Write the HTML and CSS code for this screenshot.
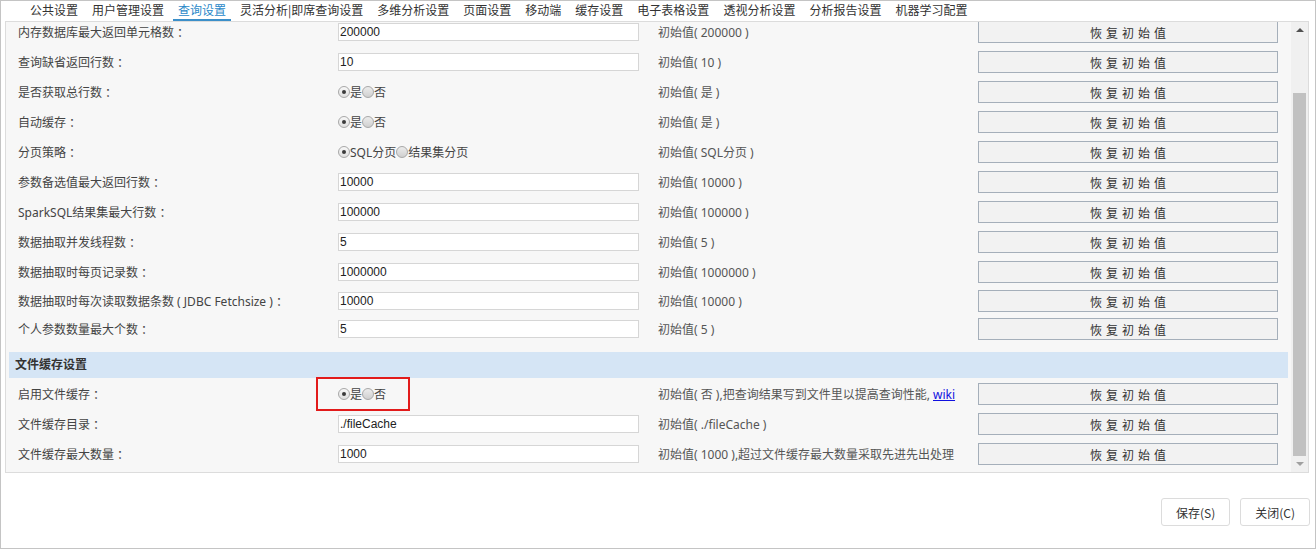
FILE: index.html
```html
<html>
    <head>
        <meta charset="utf-8" />
        <title>系统选项</title>
        <link rel="stylesheet" href="styles.css">
    </head>
    <body>
        <div class="win">
            <div class="tabs">
                <span class="tab">公共设置</span>
                <span class="tab">用户管理设置</span>
                <span class="tab on">查询设置</span>
                <span class="tab">灵活分析|即席查询设置</span>
                <span class="tab">多维分析设置</span>
                <span class="tab">页面设置</span>
                <span class="tab">移动端</span>
                <span class="tab">缓存设置</span>
                <span class="tab">电子表格设置</span>
                <span class="tab">透视分析设置</span>
                <span class="tab">分析报告设置</span>
                <span class="tab">机器学习配置</span>
            </div>
            <div class="panel">
                <div class="view">
                    <div class="list">
                        <div class="row">
                            <span class="lbl">内存数据库最大返回单元格数 ：</span>
                            <span><input class="txt" value="200000"></span>
                            <span class="init">初始值( 200000 )</span>
                            <span><button class="reset">恢复初始值</button></span>
                        </div>
                        <div class="row">
                            <span class="lbl">查询缺省返回行数 ：</span>
                            <span><input class="txt" value="10"></span>
                            <span class="init">初始值( 10 )</span>
                            <span><button class="reset">恢复初始值</button></span>
                        </div>
                        <div class="row">
                            <span class="lbl">是否获取总行数 ：</span>
                            <span class="opts"><i class="radio on"></i>是<i class="radio"></i>否</span>
                            <span class="init">初始值( 是 )</span>
                            <span><button class="reset">恢复初始值</button></span>
                        </div>
                        <div class="row">
                            <span class="lbl">自动缓存 ：</span>
                            <span class="opts"><i class="radio on"></i>是<i class="radio"></i>否</span>
                            <span class="init">初始值( 是 )</span>
                            <span><button class="reset">恢复初始值</button></span>
                        </div>
                        <div class="row">
                            <span class="lbl">分页策略 ：</span>
                            <span class="opts"><i class="radio on"></i>SQL分页<i class="radio"></i>结果集分页</span>
                            <span class="init">初始值( SQL分页 )</span>
                            <span><button class="reset">恢复初始值</button></span>
                        </div>
                        <div class="row">
                            <span class="lbl">参数备选值最大返回行数 ：</span>
                            <span><input class="txt" value="10000"></span>
                            <span class="init">初始值( 10000 )</span>
                            <span><button class="reset">恢复初始值</button></span>
                        </div>
                        <div class="row">
                            <span class="lbl">SparkSQL结果集最大行数 ：</span>
                            <span><input class="txt" value="100000"></span>
                            <span class="init">初始值( 100000 )</span>
                            <span><button class="reset">恢复初始值</button></span>
                        </div>
                        <div class="row">
                            <span class="lbl">数据抽取并发线程数 ：</span>
                            <span><input class="txt" value="5"></span>
                            <span class="init">初始值( 5 )</span>
                            <span><button class="reset">恢复初始值</button></span>
                        </div>
                        <div class="row">
                            <span class="lbl">数据抽取时每页记录数 ：</span>
                            <span><input class="txt" value="1000000"></span>
                            <span class="init">初始值( 1000000 )</span>
                            <span><button class="reset">恢复初始值</button></span>
                        </div>
                        <div class="row row-s">
                            <span class="lbl">数据抽取时每次读取数据条数 ( JDBC Fetchsize ) ：</span>
                            <span><input class="txt" value="10000"></span>
                            <span class="init">初始值( 10000 )</span>
                            <span><button class="reset">恢复初始值</button></span>
                        </div>
                        <div class="row row-s">
                            <span class="lbl">个人参数数量最大个数 ：</span>
                            <span><input class="txt" value="5"></span>
                            <span class="init">初始值( 5 )</span>
                            <span><button class="reset">恢复初始值</button></span>
                        </div>

                        <div class="sect">文件缓存设置</div>

                        <div class="row">
                            <span class="lbl">启用文件缓存 ：</span>
                            <span class="opts"><span class="mark"><i class="radio on"></i>是<i class="radio"></i>否</span></span>
                            <span class="init">初始值( 否 ),把查询结果写到文件里以提高查询性能, <a href="#">wiki</a></span>
                            <span><button class="reset">恢复初始值</button></span>
                        </div>
                        <div class="row">
                            <span class="lbl">文件缓存目录 ：</span>
                            <span><input class="txt" value="./fileCache"></span>
                            <span class="init">初始值( ./fileCache )</span>
                            <span><button class="reset">恢复初始值</button></span>
                        </div>
                        <div class="row">
                            <span class="lbl">文件缓存最大数量 ：</span>
                            <span><input class="txt" value="1000"></span>
                            <span class="init">初始值( 1000 ),超过文件缓存最大数量采取先进先出处理</span>
                            <span><button class="reset">恢复初始值</button></span>
                        </div>
                    </div>
                </div>
                <div class="sbar">
                    <div class="sb-up"></div>
                    <div class="sb-track"><div class="sb-thumb"></div></div>
                    <div class="sb-down"></div>
                </div>
            </div>
            <div class="foot">
                <button class="btn">保存(S)</button>
                <button class="btn">关闭(C)</button>
            </div>
        </div>
    </body>
</html>
```

FILE: styles.css
```css
body {
    margin: 0;
    font-family: "Noto Sans", "Noto Sans CJK SC", sans-serif;
    font-size: 12px;
    color: #444;
}
.win {
    width: 1316px;
    height: 549px;
    box-sizing: border-box;
    border: 1px solid #c4c4c4;
    background: #fff;
}
.tabs {
    height: 20px;
    padding-left: 22px;
    display: flex;
    white-space: nowrap;
    font-family: "Noto Sans CJK SC", sans-serif;
}
.tab {
    margin: 0 2px;
    padding: 0 5px;
    line-height: 18px;
    height: 18px;
    color: #333;
    border-bottom: 2px solid transparent;
}
.tab.on {
    color: #2a88c8;
    border-bottom-color: #3b8fc9;
}
.panel {
    height: 452px;
    margin: 0 6px 0 4px;
    box-sizing: border-box;
    border: 1px solid #dcdcdc;
    background: #f7f7f7;
    display: flex;
}
.view {
    flex: 1;
    overflow: hidden;
    padding: 0 3px;
}
.list {
    margin-top: -5px;
}
.row {
    height: 30px;
    padding-left: 9px;
    display: grid;
    grid-template-columns: 320px 320px 320px 300px;
    align-items: center;
    white-space: nowrap;
}
.row-s {
    height: 28px;
}
.lbl {
    color: #444;
}
.txt {
    display: block;
    width: 301px;
    height: 18px;
    box-sizing: border-box;
    border: 1px solid #d6d6d6;
    padding: 0 1px;
    font-family: "Liberation Sans", "Noto Sans CJK SC", sans-serif;
    font-size: 12px;
    color: #222;
    background: #fff;
    outline: none;
}
.init {
    color: #555;
}
.init a {
    color: #1010e0;
}
.reset {
    display: block;
    width: 300px;
    height: 22px;
    border: 1px solid #a5afba;
    background: #f2f2f2;
    font-family: "Noto Sans CJK SC", sans-serif;
    font-size: 12px;
    letter-spacing: 4px;
    padding: 0 0 0 4px;
    color: #333;
}
.opts {
    display: flex;
    align-items: center;
    color: #444;
}
.radio {
    display: inline-block;
    width: 12px;
    height: 12px;
    box-sizing: border-box;
    border-radius: 50%;
    border: 1px solid #a8a8a8;
    background: linear-gradient(#ececec, #cfcfcf);
    position: relative;
}
.radio.on {
    background: linear-gradient(#f8f8f8, #dedede);
}
.radio.on::after {
    content: "";
    position: absolute;
    left: 3px;
    top: 3px;
    width: 4px;
    height: 4px;
    border-radius: 50%;
    background: #3a3a3a;
}
.mark {
    display: inline-flex;
    align-items: center;
    height: 34px;
    box-sizing: border-box;
    margin: -2px 0 -2px -22px;
    padding: 0 22px 0 20px;
    border: 2px solid #e21b1b;
}
.sect {
    margin-top: 9px;
    margin-bottom: 1px;
    height: 26px;
    line-height: 26px;
    padding-left: 6px;
    background: #d5e5f5;
    font-weight: bold;
    color: #333;
}
.sbar {
    width: 17px;
    background: #f0f0f0;
    display: flex;
    flex-direction: column;
}
.sb-up, .sb-down {
    height: 17px;
    display: flex;
    align-items: center;
    justify-content: center;
}
.sb-up::before {
    content: "";
    border: 4px solid transparent;
    border-bottom: 4px solid #505050;
    margin-top: -4px;
}
.sb-down::before {
    content: "";
    border: 4px solid transparent;
    border-top: 4px solid #a0a0a0;
    margin-top: 4px;
}
.sb-track {
    flex: 1;
    padding: 54px 2px 0;
}
.sb-thumb {
    height: 363px;
    background: #c1c1c1;
}
.foot {
    display: flex;
    justify-content: flex-end;
    gap: 10px;
    padding: 25px 5px 0 0;
}
.btn {
    height: 28px;
    padding: 0 14px;
    border: 1px solid #dcdcdc;
    border-radius: 3px;
    background: #fff;
    font-family: "Noto Sans CJK SC", sans-serif;
    font-size: 12px;
    color: #333;
}
```
